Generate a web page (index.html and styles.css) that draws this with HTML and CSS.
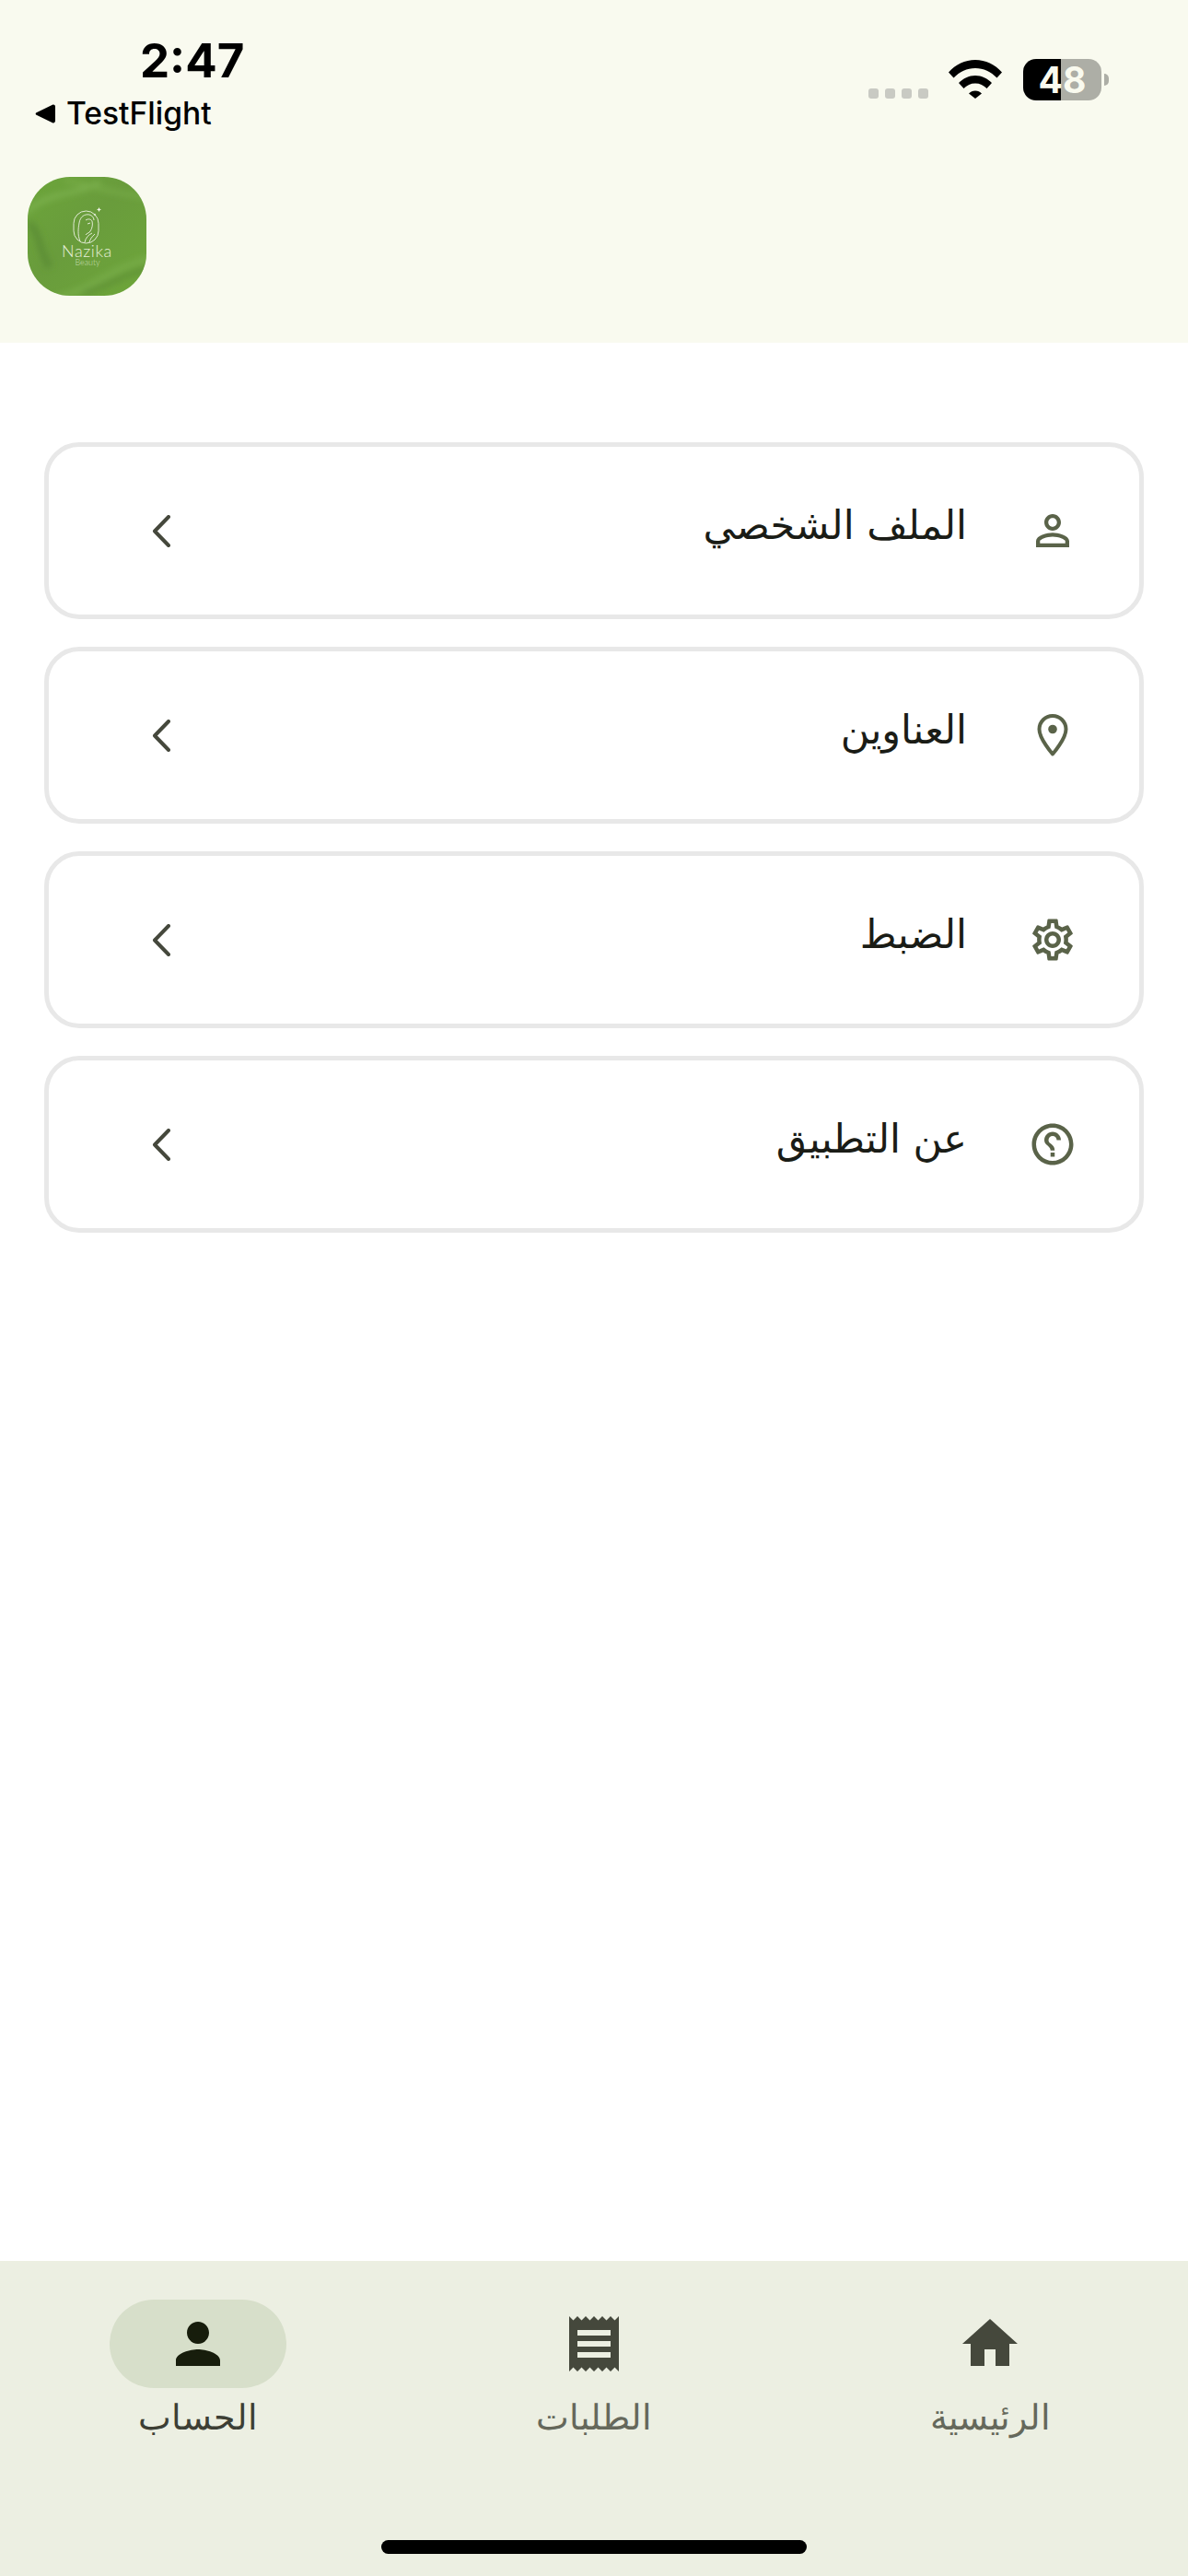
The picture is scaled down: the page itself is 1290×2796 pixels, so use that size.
FILE: index.html
```html
<!DOCTYPE html>
<html lang="ar">
<head>
    <meta charset="UTF-8">
    <meta name="viewport" content="width=device-width, initial-scale=1.0">
    <title>الحساب</title>
    <link rel="stylesheet" href="styles.css">
</head>
<body>
    <div class="page">
        <header class="top">
            <div class="status">
                <div class="status-left">
                    <div class="time">2:47</div>
                    <div class="back">
                        <svg class="back-arrow" viewBox="0 0 22 21"><path d="M1.5 9.2 19 .8c1.400-.6 3 .3 3 1.900v15.600c0 1.600-1.600 2.500-3 1.900L1.500 11.800c-1.100-.5-1.100-2.100 0-2.600z"/></svg>
                        <span>TestFlight</span>
                    </div>
                </div>
                <div class="status-right">
                    <div class="signal"><i></i><i></i><i></i><i></i></div>
                    <svg class="wifi" viewBox="0 0 58 42"><path d="M0 13.500C7.500 5 18 0 29 0s21.500 5 29 13.500l-5.500 6C46 13 38 9 29 9s-17 4-23.500 10.500z"/><path d="M11 25c5-5 11-8 18-8s13 3 18 8l-5.500 6C38 27.500 34 25.500 29 25.500S20 27.500 16.500 31z"/><path d="M22 36.500c2-2 4-3 7-3s5 1 7 3L29 42z"/></svg>
                    <div class="battery-wrap">
                        <div class="battery">48</div>
                        <div class="battery-nub"></div>
                    </div>
                </div>
            </div>
            <svg class="logo" viewBox="0 0 129 129">
                <defs>
                    <linearGradient id="leaf" x1="0" y1="0" x2="1" y2="1">
                        <stop offset="0" stop-color="#6ca53a"/>
                        <stop offset="0.45" stop-color="#699c3c"/>
                        <stop offset="1" stop-color="#6ea63a"/>
                    </linearGradient>
                    <filter id="soft" x="-20%" y="-20%" width="140%" height="140%"><feGaussianBlur stdDeviation="3.5"/></filter>
                </defs>
                <rect width="129" height="129" fill="url(#leaf)"/>
                <g fill="none" filter="url(#soft)">
                    <path d="M-5 40C25 14 55 20 78 6" stroke="#80b552" stroke-width="4"/>
                    <path d="M40 4c30 4 55 16 95 18" stroke="#7cb04c" stroke-width="3"/>
                    <path d="M2 50c12 12 10 30 22 48" stroke="#5c8d36" stroke-width="7"/>
                    <path d="M30 132c40-10 62-34 104-44" stroke="#7cb04e" stroke-width="4"/>
                    <path d="M60 126c30-8 50-24 74-26" stroke="#5f9136" stroke-width="5"/>
                </g>
                <g fill="none" stroke="#eef3e4" stroke-width="0.9">
                    <rect x="50" y="37" width="27" height="35" rx="13.500"/>
                    <path d="M57 70c-3-8-2-14-1-20 1-7 6-10 11-9 3 1 5 3 5 6"/>
                    <path d="M63 47c3-2 6-1 7 1 1 4 0 8-2 11-1 2-4 2-5 4"/>
                    <path d="M62 71c1-5 4-8 8-10M67 71c1-4 3-6 6-9M65 51l3-1"/>
                </g>
                <path d="M77.500 33l.8 1.700 1.700.8-1.700.8-.8 1.700-.8-1.700-1.700-.8 1.700-.8zM73 39.500l.5 1 1 .5-1 .5-.5 1-.5-1-1-.5 1-.5z" fill="#eef3e4"/>
                <text class="logo-name" x="64.500" y="87" text-anchor="middle">Nazika</text>
                <text class="logo-sub" x="65" y="96" text-anchor="middle">Beauty</text>
            </svg>
        </header>

        <main class="menu" dir="rtl">
            <div class="menu-item">
                <svg class="menu-icon" viewBox="0 0 24 24"><path d="M12 5.900c1.160 0 2.100.94 2.100 2.100s-.94 2.100-2.100 2.100S9.900 9.160 9.900 8s.94-2.100 2.100-2.100m0 9c2.970 0 6.100 1.460 6.100 2.100v1.100H5.900V17c0-.64 3.130-2.100 6.100-2.100M12 4C9.790 4 8 5.790 8 8s1.790 4 4 4 4-1.790 4-4-1.790-4-4-4zm0 9c-2.670 0-8 1.340-8 4v3h16v-3c0-2.660-5.330-4-8-4z"/></svg>
                <span class="menu-text">الملف الشخصي</span>
                <svg class="chevron" viewBox="0 0 20 35"><path d="M18 2 3 17.500 18 33"/></svg>
            </div>
            <div class="menu-item">
                <svg class="menu-icon" viewBox="0 0 54 54"><path class="pin" d="M27 47.500C27 47.500 12.500 31 12.500 20.500a14.500 14.500 0 0 1 29 0C41.500 31 27 47.500 27 47.500z"/><circle cx="27" cy="20.500" r="4.800"/></svg>
                <span class="menu-text">العناوين</span>
                <svg class="chevron" viewBox="0 0 20 35"><path d="M18 2 3 17.500 18 33"/></svg>
            </div>
            <div class="menu-item">
                <svg class="menu-icon" viewBox="0 0 24 24"><path d="M19.430 12.980c.04-.32.07-.64.07-.98 0-.34-.03-.66-.07-.98l2.110-1.650c.19-.15.24-.42.12-.64l-2-3.460c-.09-.16-.26-.25-.44-.25-.06 0-.12.01-.17.03l-2.490 1c-.52-.4-1.080-.73-1.690-.98l-.38-2.650C14.460 2.180 14.250 2 14 2h-4c-.25 0-.46.18-.49.42l-.38 2.650c-.61.25-1.170.59-1.690.98l-2.490-1c-.06-.02-.12-.03-.18-.03-.17 0-.34.09-.43.25l-2 3.460c-.13.22-.07.49.12.64l2.110 1.650c-.04.32-.07.65-.07.98 0 .33.03.66.07.98l-2.110 1.650c-.19.15-.24.42-.12.64l2 3.460c.09.16.26.25.44.25.06 0 .12-.01.17-.03l2.490-1c.52.4 1.080.73 1.690.98l.38 2.650c.03.24.24.42.49.42h4c.25 0 .46-.18.49-.42l.38-2.650c.61-.25 1.170-.59 1.690-.98l2.490 1c.06.02.12.03.18.03.17 0 .34-.09.43-.25l2-3.460c.12-.22.07-.49-.12-.64l-2.110-1.650zm-1.980-1.710c.04.31.05.52.05.73 0 .21-.02.43-.05.73l-.14 1.130.89.7 1.080.84-.7 1.210-1.270-.51-1.040-.42-.9.68c-.43.32-.84.56-1.250.73l-1.060.43-.16 1.130-.2 1.350h-1.400l-.19-1.350-.16-1.130-1.060-.43c-.43-.18-.83-.41-1.230-.71l-.91-.7-1.060.43-1.270.51-.7-1.210 1.080-.84.89-.7-.14-1.130c-.03-.31-.05-.54-.05-.74s.02-.43.05-.73l.14-1.130-.89-.7-1.080-.84.7-1.210 1.270.51 1.040.42.9-.68c.43-.32.84-.56 1.250-.73l1.060-.43.16-1.130.2-1.350h1.390l.19 1.350.16 1.130 1.060.43c.43.18.83.41 1.230.71l.91.7 1.060-.43 1.270-.51.7 1.210-1.070.85-.89.7.14 1.130zM12 8c-2.210 0-4 1.790-4 4s1.790 4 4 4 4-1.790 4-4-1.790-4-4-4zm0 6c-1.100 0-2-.9-2-2s.9-2 2-2 2 .9 2 2-.9 2-2 2z"/></svg>
                <span class="menu-text">الضبط</span>
                <svg class="chevron" viewBox="0 0 20 35"><path d="M18 2 3 17.500 18 33"/></svg>
            </div>
            <div class="menu-item">
                <svg class="menu-icon mirrored" viewBox="0 0 24 24"><path d="M11 18h2v-2h-2v2zm1-16C6.480 2 2 6.480 2 12s4.480 10 10 10 10-4.480 10-10S17.520 2 12 2zm0 18c-4.410 0-8-3.590-8-8s3.590-8 8-8 8 3.590 8 8-3.590 8-8 8zm0-14c-2.210 0-4 1.790-4 4h2c0-1.100.9-2 2-2s2 .9 2 2c0 2-3 1.750-3 5h2c0-2.250 3-2.500 3-5 0-2.210-1.790-4-4-4z"/></svg>
                <span class="menu-text">عن التطبيق</span>
                <svg class="chevron" viewBox="0 0 20 35"><path d="M18 2 3 17.500 18 33"/></svg>
            </div>
        </main>

        <nav class="tabs">
            <div class="tab-row" dir="rtl">
                <div class="tab">
                    <div class="tab-pill"><svg class="tab-icon" viewBox="0 0 24 24"><path d="M10 20v-6h4v6h5v-8h3L12 3 2 12h3v8z"/></svg></div>
                    <span class="tab-label">الرئيسية</span>
                </div>
                <div class="tab">
                    <div class="tab-pill"><svg class="tab-icon" viewBox="0 0 24 24"><path d="M18 17H6v-2h12v2zm0-4H6v-2h12v2zm0-4H6V7h12v2zM3 22l1.500-1.500L6 22l1.500-1.500L9 22l1.500-1.500L12 22l1.500-1.500L15 22l1.500-1.500L18 22l1.500-1.500L21 22V2l-1.500 1.500L18 2l-1.500 1.500L15 2l-1.500 1.500L12 2l-1.500 1.500L9 2 7.500 3.500 6 2 4.500 3.500 3 2v20z"/></svg></div>
                    <span class="tab-label">الطلبات</span>
                </div>
                <div class="tab active">
                    <div class="tab-pill"><svg class="tab-icon" viewBox="0 0 24 24"><path d="M12 12c2.210 0 4-1.790 4-4s-1.790-4-4-4-4 1.790-4 4 1.790 4 4 4zm0 2c-2.670 0-8 1.340-8 4v2h16v-2c0-2.660-5.330-4-8-4z"/></svg></div>
                    <span class="tab-label">الحساب</span>
                </div>
            </div>
            <div class="home-bar"></div>
        </nav>
    </div>
</body>
</html>
```

FILE: styles.css
```css
body {
    margin: 0;
    font-family: "DejaVu Sans", sans-serif;
    background-color: #ffffff;
}
.page {
    width: 1290px;
    height: 2796px;
    display: flex;
    flex-direction: column;
    overflow: hidden;
}

/* Header */
.top {
    height: 372px;
    background-color: #f9faef;
    flex-shrink: 0;
}
.status {
    display: flex;
    justify-content: space-between;
    align-items: flex-start;
}
.status-left {
    padding: 36px 0 0 38px;
    font-family: Inter, sans-serif;
    color: #000000;
}
.time {
    margin-left: 114px;
    font-size: 51px;
    line-height: 60px;
    font-weight: 700;
}
.back {
    margin-top: 7px;
    display: flex;
    align-items: center;
    gap: 12px;
    font-size: 33.6px;
    line-height: 40px;
    font-weight: 500;
}
.back-arrow {
    width: 22px;
    height: 21px;
}
.status-right {
    height: 109px;
    padding-right: 86px;
    display: flex;
    align-items: flex-end;
}
.signal {
    display: flex;
    gap: 7px;
    margin: 0 22px 2px 0;
}
.signal i {
    width: 11px;
    height: 11px;
    border-radius: 3px;
    background-color: #c9cac3;
}
.wifi {
    width: 58px;
    height: 42px;
    margin: 0 23px 2px 0;
}
.battery-wrap {
    display: flex;
    align-items: center;
    gap: 3px;
}
.battery {
    width: 85px;
    height: 45px;
    border-radius: 14px;
    background: linear-gradient(90deg, #000000 41px, #adaea6 41px);
    color: #f9faef;
    font-family: Inter, sans-serif;
    font-size: 39px;
    font-weight: 700;
    line-height: 45px;
    text-align: center;
}
.battery-nub {
    width: 5px;
    height: 13px;
    border-radius: 0 5px 5px 0;
    background-color: #adaea6;
}
.logo {
    display: block;
    width: 129px;
    height: 129px;
    margin: 49px 0 0 30px;
    border-radius: 46px;
}
.logo-name {
    font-family: Lato, sans-serif;
    font-size: 18px;
    font-weight: 300;
    letter-spacing: 0.6px;
    fill: #e6efd9;
}
.logo-sub {
    font-family: Lato, sans-serif;
    font-size: 9px;
    font-weight: 300;
    fill: #c5dcab;
}

/* Menu cards */
.menu {
    flex: 1;
    padding: 108px 48px 0;
    display: flex;
    flex-direction: column;
    gap: 30px;
}
.menu-item {
    height: 192px;
    box-sizing: border-box;
    border: 5px solid #e8e8e8;
    border-radius: 38px;
    padding: 0 67px 0 112px;
    display: flex;
    align-items: center;
    gap: 66px;
}
.menu-icon {
    width: 54px;
    height: 54px;
    fill: #5a6349;
    flex-shrink: 0;
}
.menu-icon .pin {
    fill: none;
    stroke: #5a6349;
    stroke-width: 4;
    stroke-linejoin: round;
}
.mirrored {
    transform: scaleX(-1);
}
.menu-text {
    flex: 1;
    margin-bottom: 12px;
    font-size: 43px;
    color: #1a1c16;
}
.chevron {
    width: 20px;
    height: 35px;
    fill: none;
    stroke: #45483c;
    stroke-width: 4;
    stroke-linecap: round;
    stroke-linejoin: round;
}

/* Bottom navigation */
.tabs {
    height: 342px;
    flex-shrink: 0;
    background-color: #ecefe2;
    display: flex;
    flex-direction: column;
    align-items: center;
}
.tab-row {
    width: 100%;
    padding-top: 42px;
    display: grid;
    grid-template-columns: repeat(3, 1fr);
}
.tab {
    display: flex;
    flex-direction: column;
    align-items: center;
    color: #65685b;
}
.tab-pill {
    width: 192px;
    height: 96px;
    border-radius: 48px;
    display: flex;
    align-items: center;
    justify-content: center;
}
.tab-icon {
    width: 72px;
    height: 72px;
    fill: #45483c;
}
.tab-label {
    margin-top: 12px;
    font-size: 38px;
    font-weight: 200;
    line-height: 40px;
}
.tab.active {
    color: #3d3f35;
}
.tab.active .tab-pill {
    background-color: #d7dfca;
}
.tab.active .tab-icon {
    fill: #171d0c;
}
.home-bar {
    width: 462px;
    height: 15px;
    margin-top: auto;
    margin-bottom: 24px;
    border-radius: 8px;
    background-color: #000000;
}
```
